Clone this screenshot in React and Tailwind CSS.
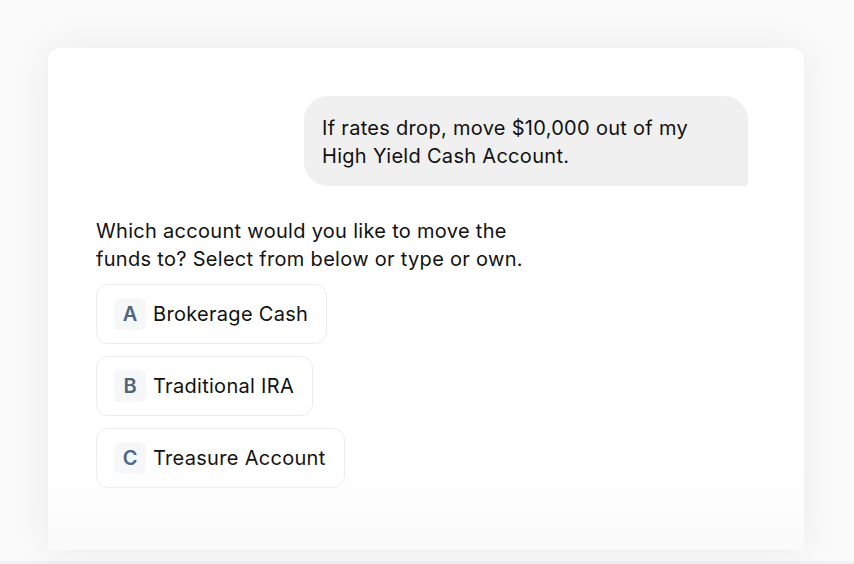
import React from "react";

const options = [
  { key: "A", label: "Brokerage Cash" },
  { key: "B", label: "Traditional IRA" },
  { key: "C", label: "Treasure Account" },
];

export default function App() {
  return (
    <div
      className="w-[854px] h-[564px] overflow-hidden bg-[#fafafa] flex flex-col"
      style={{ fontFamily: "Inter, 'Noto Sans', sans-serif" }}
    >
      <div className="flex-1 pl-12 pr-[50px] pt-12 pb-[11px] flex flex-col">
        <div className="relative flex-1 bg-white rounded-t-xl shadow-[0_0_36px_rgba(0,0,0,0.07)] pl-12 pr-14 pt-12 flex flex-col overflow-hidden tracking-[0.3px]">
          <div className="flex justify-end">
            <div className="w-[444px] bg-[#f0f0f0] rounded-[24px] rounded-br-[4px] pl-[18px] pr-4 pt-[18px] pb-4 text-[20px] leading-[28px] text-[#111111]">
              If rates drop, move $10,000 out of my High Yield Cash Account.
            </div>
          </div>
          <p className="mt-[31px] max-w-[448px] text-[20px] leading-[28px] text-[#111111]">
            Which account would you like to move the funds to? Select from below or type or own.
          </p>
          <div className="mt-[11px] flex flex-col items-start gap-3">
            {options.map((o) => (
              <div
                key={o.key}
                className="flex items-center gap-[7px] h-[60px] pl-[17px] pr-[18px] border border-[#ebebeb] rounded-xl bg-white"
              >
                <div className="w-8 h-8 rounded-md bg-[#f6f7f9] flex items-center justify-center text-[20px] font-semibold text-[#4e6580] tracking-normal">
                  {o.key}
                </div>
                <span className="text-[20px] leading-[28px] text-[#111111]">{o.label}</span>
              </div>
            ))}
          </div>
          <div className="absolute left-0 right-0 bottom-0 h-[90px] bg-gradient-to-b from-white/0 to-[#fafafa]" />
        </div>
      </div>
      <div className="h-[3px] bg-[#eef1f5]" />
    </div>
  );
}
